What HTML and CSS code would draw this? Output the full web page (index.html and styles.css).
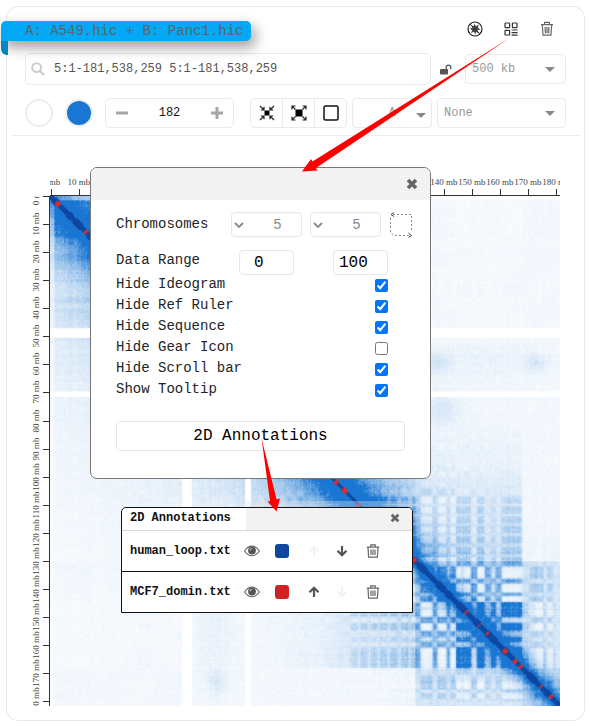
FILE: index.html
```html
<!DOCTYPE html>
<html lang="en">
<head>
<meta charset="utf-8">
<meta name="viewport" content="width=device-width, initial-scale=1">
<title>Hi-C contact map</title>
<link rel="stylesheet" href="styles.css">
</head>
<body>
<main class="panel">
  <header class="panel-head">
    <h1 class="ribbon">A: A549.hic + B: Panc1.hic</h1>
    <div class="panel-actions">
      <button class="icon-btn" type="button" aria-label="Aperture">
        <svg width="16" height="16" viewBox="0 0 16 16"><circle cx="8" cy="8" r="7" fill="none" stroke="#222" stroke-width="1.2"/><path d="M7 2.500 9 5.200 12 3.500 10.800 6.500 13.500 8.500 10.500 9 11.500 12.500 9 10.800 8.500 13.500 6.800 10.800 4 12 5.200 9.200 2.500 7.500 5.500 7 4.300 4.300 7 5.200z" fill="#444"/><path d="M3 3l10 10" stroke="#222"/></svg>
      </button>
      <button class="icon-btn" type="button" aria-label="Settings">
        <svg width="14" height="14" viewBox="0 0 14 14" fill="none" stroke="#333" stroke-width="1.2"><rect x="1" y="1" width="4.6" height="4.6" rx=".6"/><rect x="8.4" y="1" width="4.6" height="4.6" rx=".6"/><rect x="1" y="8.4" width="4.6" height="4.6" rx=".6"/><path d="M7.6 8h6M7.6 10.6h6M7.6 13.2h6"/></svg>
      </button>
      <button class="icon-btn" type="button" aria-label="Delete">
        <svg width="14" height="16" viewBox="0 0 14 16" fill="none" stroke="#666" stroke-width="1.2"><path d="M1 3.6h12M4.6 3.4V1.4h4.8v2M2.3 4l.8 10.2h7.8L11.700 4M5.100 6l.3 6.200M7 6v6.200M8.900 6l-.3 6.200"/></svg>
      </button>
    </div>
  </header>

  <div class="bar">
    <label class="search">
      <svg width="14" height="14" viewBox="0 0 14 14" fill="none" stroke="#ccc" stroke-width="2"><circle cx="5.600" cy="5.600" r="4.400"/><path d="M9 9l4 4"/></svg>
      <input type="text" aria-label="Locus" value="5:1-181,538,259 5:1-181,538,259">
    </label>
    <button class="icon-btn lock" type="button" aria-label="Unlock">
      <svg width="12" height="11" viewBox="0 0 12 11"><rect x="0" y="5" width="8" height="5.500" rx=".8" fill="#555"/><path d="M6.200 5V3.400a2.300 2.300 0 0 1 4.600 0V5.200" fill="none" stroke="#555" stroke-width="1.300"/></svg>
    </button>
    <span class="pick pick-res"><select aria-label="Resolution"><option>500 kb</option></select></span>
  </div>

  <div class="bar tools">
    <button class="swatch" type="button" aria-label="Background colour"></button>
    <button class="swatch swatch-blue" type="button" aria-label="Map colour"></button>
    <div class="stepper">
      <button type="button" aria-label="Decrease"><svg width="12" height="12" viewBox="0 0 12 12" stroke="#a6a6a6" stroke-width="3"><path d="M0 6h12"/></svg></button>
      <input type="text" aria-label="Threshold" value="182">
      <button type="button" aria-label="Increase"><svg width="12" height="12" viewBox="0 0 12 12" stroke="#a6a6a6" stroke-width="3"><path d="M0 6h12M6 0v12"/></svg></button>
    </div>
    <div class="group">
      <button type="button" aria-label="Zoom in"><svg width="16" height="16" viewBox="0 0 16 16" fill="none" stroke="#222" stroke-width="1.200"><rect x="5.500" y="5.500" width="5" height="5" fill="#000" stroke="none"/><path d="M1 1l4 4M5 1.800V5H1.800M15 1l-4 4M11 1.800V5h3.200M1 15l4-4M1.800 11H5v3.200M15 15l-4-4M14.200 11H11v3.200"/></svg></button>
      <button type="button" aria-label="Zoom out"><svg width="16" height="16" viewBox="0 0 16 16" fill="none" stroke="#222" stroke-width="1.200"><rect x="4.500" y="4.500" width="7" height="7" fill="#000" stroke="none"/><path d="M1.200 1.200l3.300 3.300M1 4.500V1h3.500M14.800 1.200l-3.300 3.300M11.500 1H15v3.500M1.200 14.800l3.300-3.300M1 11.500V15h3.500M14.800 14.800l-3.300-3.300M11.500 15H15v-3.500"/></svg></button>
      <button type="button" aria-label="Whole region"><svg width="16" height="16" viewBox="0 0 16 16"><rect x="1" y="1" width="14" height="14" rx="1.500" fill="none" stroke="#111" stroke-width="1.500"/></svg></button>
    </div>
    <span class="pick pick-mode"><select aria-label="Display mode"><option>A</option></select></span>
    <span class="pick pick-norm"><select aria-label="Normalisation"><option>None</option></select></span>
  </div>

  <section class="map" aria-label="Contact map">
    <svg class="ruler-top" viewBox="0 0 510 20">
      <path class="axis" d="M0 19.500H510M1.500 13v7M29.500 13v7M394.500 13v7M422.500 13v7M450.500 13v7M478.500 13v7M506.500 13v7"/>
      <g class="ticks"><text x="1" y="9">0 mb</text><text x="29" y="9">10 mb</text><text x="394" y="9">140 mb</text><text x="422" y="9">150 mb</text><text x="450" y="9">160 mb</text><text x="478" y="9">170 mb</text><text x="506" y="9">180 mb</text></g>
    </svg>
    <svg class="ruler-left" viewBox="0 0 20 510">
      <path class="axis" d="M19.500 0V510M13 .5h7M13 28.500h7M13 56.500h7M13 84.500h7M13 112.500h7M13 140.500h7M13 168.500h7M13 196.500h7M13 225.500h7M13 253.500h7M13 281.500h7M13 309.500h7M13 337.500h7M13 365.500h7M13 393.500h7M13 421.500h7M13 449.500h7M13 477.500h7M13 505.500h7"/>
      <g class="ticks" transform="rotate(-90)"><text x="0" y="9">0 mb</text><text x="-28" y="9">10 mb</text><text x="-56" y="9">20 mb</text><text x="-84" y="9">30 mb</text><text x="-112" y="9">40 mb</text><text x="-140" y="9">50 mb</text><text x="-168" y="9">60 mb</text><text x="-196" y="9">70 mb</text><text x="-225" y="9">80 mb</text><text x="-253" y="9">90 mb</text><text x="-281" y="9">100 mb</text><text x="-309" y="9">110 mb</text><text x="-337" y="9">120 mb</text><text x="-365" y="9">130 mb</text><text x="-393" y="9">140 mb</text><text x="-421" y="9">150 mb</text><text x="-449" y="9">160 mb</text><text x="-477" y="9">170 mb</text><text x="-505" y="9">180 mb</text></g>
    </svg>
    <canvas id="contacts" width="363" height="363"></canvas>
  </section>
</main>

<section class="dialog" aria-label="Map settings">
  <header class="dialog-head">
    <button class="icon-btn" type="button" aria-label="Close settings"><svg width="12" height="12" viewBox="0 0 12 12"><path d="M2 2l8 8M10 2l-8 8" stroke="#666" stroke-width="3.600"/></svg></button>
  </header>
  <form class="dialog-body">
    <div class="field">
      <label for="chr1">Chromosomes</label>
      <span class="chr"><svg width="10" height="6" viewBox="0 0 10 6"><path d="M1 1l4 4 4-4" fill="none" stroke="#888" stroke-width="1.800"/></svg><select id="chr1"><option>5</option></select></span>
      <span class="chr"><svg width="10" height="6" viewBox="0 0 10 6"><path d="M1 1l4 4 4-4" fill="none" stroke="#888" stroke-width="1.800"/></svg><select aria-label="Second chromosome"><option>5</option></select></span>
      <button class="icon-btn" type="button" aria-label="Swap chromosomes"><svg width="24" height="26" viewBox="0 0 24 26" fill="none" stroke="#888"><path d="M4 2.500h18.500V20M20 23.500H5l-3.500-3V4" stroke-dasharray="2 2"/><path d="M5 .5L2 2.500 5 4.500M19.500 21l3 2.500-3 2" stroke="#444"/></svg></button>
    </div>
    <div class="field range">
      <label for="lo">Data Range</label>
      <input id="lo" class="low" type="text" value="0">
      <input type="text" aria-label="Data range maximum" value="100">
    </div>
    <label class="check">Hide Ideogram<input type="checkbox" checked></label>
    <label class="check">Hide Ref Ruler<input type="checkbox" checked></label>
    <label class="check">Hide Sequence<input type="checkbox" checked></label>
    <label class="check">Hide Gear Icon<input type="checkbox"></label>
    <label class="check">Hide Scroll bar<input type="checkbox" checked></label>
    <label class="check">Show Tooltip<input type="checkbox" checked></label>
    <button class="annotate" type="button">2D Annotations</button>
  </form>
</section>

<section class="tracks" aria-label="Annotation tracks">
  <header class="tracks-head">
    <h2>2D Annotations</h2>
    <button class="icon-btn" type="button" aria-label="Close annotations"><svg width="10" height="10" viewBox="0 0 12 12"><path d="M2 2l8 8M10 2l-8 8" stroke="#666" stroke-width="3.400"/></svg></button>
  </header>
  <div class="track">
    <span class="name">human_loop.txt</span>
    <button class="icon-btn" type="button" aria-label="Toggle human_loop.txt"><svg width="16" height="12" viewBox="0 0 16 12"><path d="M.6 6C4.500-.5 11.500-.5 15.400 6 11.500 12.300 4.500 12.300.6 6z" fill="none" stroke="#666" stroke-width="1.100"/><circle cx="8" cy="5.600" r="3.900" fill="#555"/><path d="M6 5.200A2 2 0 0 1 7.800 3.500" fill="none" stroke="#fff" stroke-width=".9"/></svg></button>
    <button class="color color-blue" type="button" aria-label="Colour of human_loop.txt"></button>
    <button class="icon-btn" type="button" aria-label="Move up" disabled><svg width="12" height="12" viewBox="0 0 12 12" fill="none" stroke="#f2f2f2" stroke-width="2.200"><path d="M6 11V2M1.500 6.300L6 1.800l4.500 4.500"/></svg></button>
    <button class="icon-btn" type="button" aria-label="Move down"><svg width="12" height="12" viewBox="0 0 12 12" fill="none" stroke="#555" stroke-width="2.200"><path d="M6 1v9M1.500 5.700L6 10.200l4.500-4.500"/></svg></button>
    <button class="icon-btn" type="button" aria-label="Remove human_loop.txt"><svg width="14" height="14" viewBox="0 0 14 14" fill="none" stroke="#666" stroke-width="1.200"><path d="M.8 3.200h12.400M4.800 3V.8h4.400V3M2 3.400l.6 9.800h8.800L12 3.400M5 5.500v5.600M7 5.500v5.600M9 5.500v5.600"/></svg></button>
  </div>
  <div class="track">
    <span class="name">MCF7_domin.txt</span>
    <button class="icon-btn" type="button" aria-label="Toggle MCF7_domin.txt"><svg width="16" height="12" viewBox="0 0 16 12"><path d="M.6 6C4.500-.5 11.500-.5 15.400 6 11.500 12.300 4.500 12.300.6 6z" fill="none" stroke="#666" stroke-width="1.100"/><circle cx="8" cy="5.600" r="3.900" fill="#555"/><path d="M6 5.200A2 2 0 0 1 7.800 3.500" fill="none" stroke="#fff" stroke-width=".9"/></svg></button>
    <button class="color color-red" type="button" aria-label="Colour of MCF7_domin.txt"></button>
    <button class="icon-btn" type="button" aria-label="Move up"><svg width="12" height="12" viewBox="0 0 12 12" fill="none" stroke="#555" stroke-width="2.200"><path d="M6 11V2M1.500 6.300L6 1.800l4.500 4.500"/></svg></button>
    <button class="icon-btn" type="button" aria-label="Move down" disabled><svg width="12" height="12" viewBox="0 0 12 12" fill="none" stroke="#f2f2f2" stroke-width="2.200"><path d="M6 1v9M1.500 5.700L6 10.200l4.500-4.500"/></svg></button>
    <button class="icon-btn" type="button" aria-label="Remove MCF7_domin.txt"><svg width="14" height="14" viewBox="0 0 14 14" fill="none" stroke="#666" stroke-width="1.200"><path d="M.8 3.200h12.400M4.800 3V.8h4.400V3M2 3.400l.6 9.800h8.800L12 3.400M5 5.500v5.600M7 5.500v5.600M9 5.500v5.600"/></svg></button>
  </div>
</section>

<svg class="arrows" width="590" height="726" viewBox="0 0 590 726" aria-hidden="true">
  <path fill="#f00" d="M511 37L312.500 161.500l-1.500-2.500L302 171.500l15.500-1-1.500-2.500z"/>
  <path fill="#f00" d="M261.500 438L270 501l-2.500.5L276.500 511.500l3.500-13-3.500.8z"/>
</svg>
<script src="map.js"></script>
</body>
</html>
```
FILE: styles.css
```css
* { box-sizing: border-box; }

body {
  margin: 0;
  padding: 6px 5px 5px 6px;
  background: #fff;
  color: #212529;
  font-family: "Liberation Mono", monospace;
  font-size: 14px;
  position: relative;
}

button, input, select {
  margin: 0;
  font: inherit;
  color: inherit;
}

input[type="text"] {
  min-width: 0;
  padding: 0;
  border: 0;
  outline: 0;
  background: none;
}

button {
  display: flex;
  align-items: center;
  justify-content: center;
  padding: 0;
  border: 0;
  background: none;
}

svg { display: block; flex: none; }

.icon-btn { width: 16px; height: 16px; }

/* Outer panel */
.panel {
  border: 1px solid #e9e9e9;
  border-radius: 12px;
}

.panel-head {
  display: flex;
  justify-content: space-between;
  align-items: flex-start;
  height: 46px;
  padding: 14px 29px 0 0;
}

.ribbon {
  position: relative;
  margin: 0 0 0 -6px;
  padding: 0 8px 0 24px;
  border-radius: 5px 5px 5px 0;
  background: #03a9f4;
  box-shadow: 4px 6px 14px rgba(0, 0, 0, .4);
  color: #5c6468;
  font-size: 14px;
  font-weight: 400;
  line-height: 20px;
}

.ribbon::after {
  content: "";
  position: absolute;
  left: 0;
  top: 100%;
  width: 7px;
  height: 14px;
  border-radius: 0 0 0 6px;
  background: #0286c0;
}

.panel-actions { display: flex; gap: 20px; }

.bar {
  display: flex;
  align-items: center;
  height: 32px;
  margin: 0 18px;
  font-size: 12px;
}

.search {
  flex: 1;
  display: flex;
  align-items: center;
  gap: 9px;
  height: 32px;
  padding: 0 5px;
  border: 1px solid #eaeaea;
  border-radius: 5px;
  color: #555;
}

.search input { flex: 1; height: 28px; }

.lock { width: 34px; padding-right: 4px; }

.pick { position: relative; color: #999; }

.pick select {
  display: block;
  width: 100%;
  height: 30px;
  padding: 0 6px;
  border: 1px solid #eaeaea;
  border-radius: 4px;
  appearance: none;
  background: none;
}

.pick::after {
  content: "";
  position: absolute;
  right: 11px;
  top: 13px;
  border: 5px solid transparent;
  border-top-color: #888;
  border-bottom: 0;
}

.pick-res { width: 101px; }
.pick-mode { width: 80px; margin: 0 5px; }
.pick-mode select { text-align: center; text-align-last: center; }
.pick-mode::after { right: 6px; top: 15px; }
.pick-norm { flex: 1; }

.tools { height: 30px; margin-top: 13px; }

.swatch {
  width: 28px;
  height: 28px;
  margin-right: 12px;
  border: 2px solid #eee;
  border-radius: 50%;
}

.swatch-blue { background: #1976d2; }

.stepper {
  display: flex;
  align-items: center;
  width: 129px;
  height: 30px;
  margin-right: 16px;
  padding: 0 10px;
  border: 1px solid #eaeaea;
  border-radius: 5px;
}

.stepper input { flex: 1; color: #111; text-align: center; }

.group {
  display: flex;
  width: 97px;
  height: 30px;
  border: 1px solid #eaeaea;
  border-radius: 5px;
}

.group button { flex: 1; }
.group button + button { border-left: 1px solid #eaeaea; }

/* Contact map with its two rulers */
.map {
  display: grid;
  grid-template-columns: 20px 1fr;
  margin: 7px 4px 0;
  padding: 40px 20px 14px 19px;
  border-top: 1px solid #eee;
}

.ruler-top { grid-column: 2; width: 100%; overflow: hidden; }
.ruler-left { width: 20px; height: 100%; overflow: hidden; }
.axis { stroke: #333; fill: none; }

.ticks {
  font-family: "Liberation Serif", serif;
  font-size: 9px;
  fill: #444;
  text-anchor: middle;
}

#contacts {
  display: block;
  width: 100%;
  aspect-ratio: 1;
}

/* Settings dialog, floating over the map */
.dialog {
  position: absolute;
  left: 90px;
  top: 167px;
  width: 341px;
  border: 1px solid #777;
  border-radius: 7px;
  background: #fff;
  overflow: hidden;
}

.dialog-head {
  display: flex;
  justify-content: flex-end;
  align-items: center;
  height: 32px;
  padding-right: 10px;
  background: #f2f2f2;
}

.dialog-body { padding: 12px 25px 27px; }

.field {
  display: flex;
  align-items: flex-start;
  gap: 8px;
  height: 38px;
  margin-right: -10px;
}

.field > * { flex: none; }
.field label { width: 107px; line-height: 24px; }
.field .icon-btn { width: 24px; height: 26px; }

.chr {
  display: flex;
  align-items: center;
  width: 71px;
  height: 25px;
  padding: 0 2px;
  border: 1px solid #e6e6e6;
  border-radius: 4px;
  color: #888;
}

.chr select {
  flex: 1;
  border: 0;
  padding: 0 0 0 12px;
  text-align: center;
  appearance: none;
  background: none;
}

.range { gap: 39px; height: 24px; }
.range label { width: 84px; line-height: 20px; }

.range input {
  width: 55px;
  height: 25px;
  padding: 0 5px;
  border: 1px solid #e6e6e6;
  border-radius: 4px;
  color: #000;
  font-size: 16px;
}

.range .low { padding-left: 14px; }

.check {
  display: flex;
  align-items: flex-end;
  justify-content: space-between;
  height: 21px;
  padding-right: 17px;
  line-height: 21px;
}

.check input { width: 13px; height: 13px; margin-bottom: 3px; }

.annotate {
  width: 100%;
  height: 30px;
  margin-top: 21px;
  border: 1px solid #e6e6e6;
  border-radius: 4px;
  color: #000;
  font-size: 16px;
}

/* Annotation tracks, floating over the map */
.tracks {
  position: absolute;
  left: 121px;
  top: 507px;
  width: 292px;
  border: 1px solid #111;
  border-radius: 5px 5px 0 0;
  background: #fff;
  color: #111;
  font-size: 12px;
  font-weight: 700;
}

.tracks-head {
  display: flex;
  align-items: flex-start;
  height: 23px;
  border-bottom: 1px solid #d8d8d8;
}

.tracks-head h2 {
  width: 124px;
  margin: 0;
  padding-left: 8px;
  font-size: 12px;
  line-height: 20px;
}

.tracks-head .icon-btn {
  flex: 1;
  height: 22px;
  justify-content: flex-end;
  padding: 0 12px 3px 0;
  background: #f2f2f2;
  border-radius: 0 4px 0 0;
}

.tracks-head::before {
  content: "";
  position: absolute;
  right: -1px;
  top: -7px;
  width: 167px;
  height: 6px;
  background: rgba(225, 225, 225, .35);
}

.track {
  display: grid;
  grid-template-columns: 106px 32px 28px 36px 19px 44px;
  align-items: center;
  justify-items: center;
  height: 40px;
  padding-left: 8px;
}

.track + .track { height: 41px; border-top: 1px solid #111; }

.name { justify-self: start; }

.color {
  width: 14px;
  height: 14px;
  border-radius: 3px;
}

.color-blue { background: #0d47a1; }
.color-red { background: #d02224; }

.arrows {
  position: absolute;
  left: 0;
  top: 0;
  pointer-events: none;
}
```
FILE: map.js
```js
// Draws the contact matrix: one pixel per 500 kb bin, on a 510-unit axis.
const canvas = document.getElementById('contacts');
const ctx = canvas.getContext('2d');
const N = canvas.width;
const unit = 510 / N;

function rand(a, b) {
  let h = Math.imul(a + 11, 374761393) ^ Math.imul(b + 7, 668265263);
  h = Math.imul(h ^ (h >>> 13), 1274126177);
  return ((h ^ (h >>> 16)) >>> 0) / 4294967296;
}

// Compartment score of each stretch: [from, to, score]
const compartments = [
  [0, 40, 0.4], [86, 100, -0.7], [365, 370, -0.3],
  [370, 381, 1.2], [382, 387, -0.3], [387, 396, 1.2], [396, 400, -0.3], [400, 405, 1.1],
  [405, 411, -1.2], [411, 413, 0.2], [413, 420, -1.2], [421, 426, 0.7], [427, 434, -1.2],
  [435, 439, 0.3], [441, 445, -0.5], [446, 450, 0.4],
  [451, 472, -1.2], [472, 478, -0.2], [478, 483, 0.3], [484, 492, 0.8],
  [493, 495, -0.3], [496, 502, 0.6]
];
// Unmappable stretches
const gaps = [[131, 141], [195, 200]];

const score = [];
const gap = [];
for (let i = 0; i < N; i++) {
  const t = i * unit;
  let s = (rand(i >> 2, 3) - 0.5) * 0.7;
  if (t > 300 && t < 365) s = t % 10 < 7 ? -0.7 : 0.1;
  for (const [a, b, v] of compartments) if (t >= a && t < b) s = v;
  score.push(s);
  gap.push(gaps.some(([a, b]) => t >= a && t < b));
}
const smooth = score.map((s, i) => (2 * s + (score[i - 1] ?? s) + (score[i + 1] ?? s)) / 4);

const bump = (x, y, cx, cy, w, h) => Math.exp(-(((x - cx) / w) ** 2) - ((y - cy) / h) ** 2);

// Contact level away from the diagonal, by pair of domains
function background(a, b) {
  const d = b - a;
  if (a >= 472) return 0.28;
  if (a >= 365) {
    if (b >= 472) return 0.26 - (b - 472) * 0.002;
    return a >= 405 ? 0.62 : 0.42;
  }
  if (b >= 472) return 0.05 + 0.03 * Math.exp(-(365 - a) / 30);
  if (b >= 365) {
    const side = 0.7 + 0.9 * Math.exp(-(b - 365) / 14);
    const rise = a > 300 ? 0.2 + 0.1 * (a - 300) / 65 : 0.15 * Math.exp(-(300 - a) / 40) + 0.05;
    return rise * (0.55 + side * 0.4);
  }
  return 0.55 * Math.exp(-d / 62) + 0.12 * Math.exp(-d / 150) + 0.03;
}

function contact(i, j) {
  const lo = Math.min(i, j), hi = Math.max(i, j);
  const a = lo * unit, b = hi * unit, d = b - a;
  const reach = d < 60 ? 1 : Math.max(0.3, 1 - (d - 60) / 170);
  let v = background(a, b) * Math.min(1.6, Math.exp(1.25 * smooth[lo] * smooth[hi] * reach));
  v += a < 90 ? 1.2 * Math.exp(-d / 20) : a < 360 ? 1.3 * Math.exp(-d / 18) : 1.7 * Math.exp(-d / 9);
  v += 0.12 * bump(b, a, 385, 166, 14, 9) + 0.1 * bump(b, a, 485, 166, 12, 8);
  v += 0.1 * bump(b, a, 392, 212, 18, 16) + 0.05 * bump(b, a, 430, 164, 60, 18);
  if (a < 4) v *= 0.5;
  const n = rand(lo, hi) - 0.5;
  const stripe = rand(lo, 901) + rand(hi, 901) - 1;
  return v * (1 + 0.3 * n + 0.22 * stripe) + n * 0.03;
}

const red = [[5, 9], [34, 36], [284, 287], [292, 296], [307, 309], [313, 315],
  [362, 365], [415, 416], [428, 429], [436, 437], [453, 456], [463, 466],
  [469, 471], [489, 491], [499, 501]];

const img = ctx.createImageData(N, N);
for (let y = 0; y < N; y++) {
  for (let x = 0; x < N; x++) {
    let c;
    if (gap[x] || gap[y]) {
      c = [255, 255, 255];
    } else {
      const d = Math.abs(x - y);
      const t = (x + y) / 2 * unit;
      const block = Math.floor((x + y) / 5);
      const thin = t > 150 && t < 362;
      const width = thin ? 1 : 2 + Math.floor(rand(block, 44) * 2);
      if (d < 3 && red.some(([a, b]) => t >= a && t <= b)) {
        c = [211, 47, 47];
      } else if (d <= width) {
        c = [13, 71, 161];
      } else {
        const v = Math.max(0, Math.min(1, contact(x, y)));
        c = [255 - 230 * v, 255 - 137 * v, 255 - 45 * v];
      }
    }
    img.data.set([...c, 255], (y * N + x) * 4);
  }
}
ctx.putImageData(img, 0, 0);
```
